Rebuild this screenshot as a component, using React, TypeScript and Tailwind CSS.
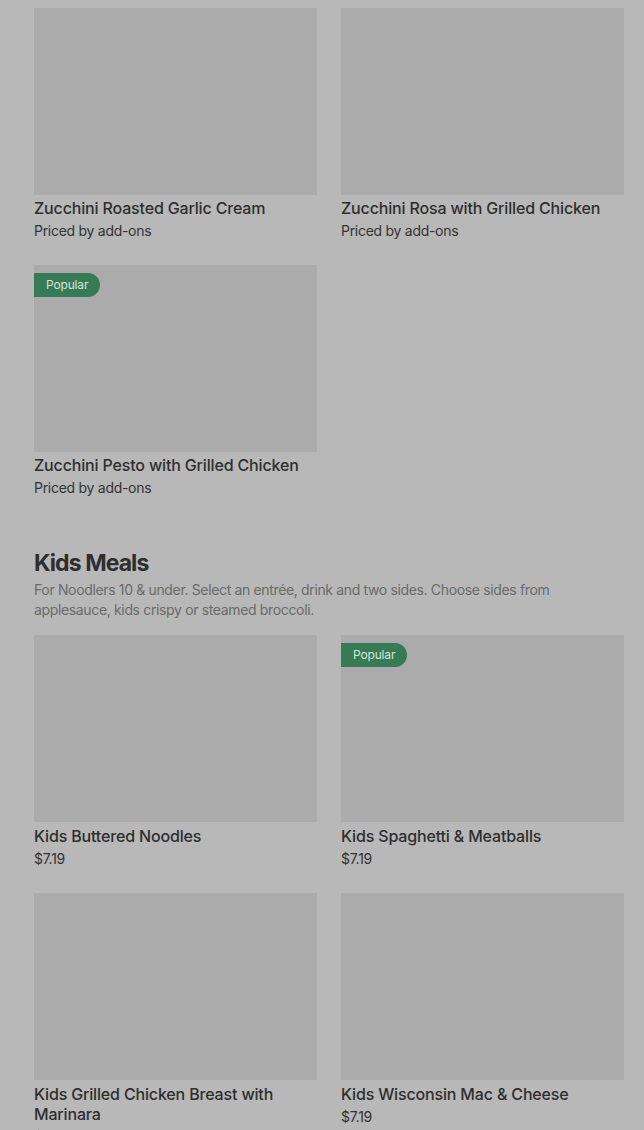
import React from "react";

type Item = { name: string; sub: string; popular?: boolean };

const zucchini: Item[] = [
  { name: "Zucchini Roasted Garlic Cream", sub: "Priced by add-ons" },
  { name: "Zucchini Rosa with Grilled Chicken", sub: "Priced by add-ons" },
  { name: "Zucchini Pesto with Grilled Chicken", sub: "Priced by add-ons", popular: true },
];

const kids: Item[] = [
  { name: "Kids Buttered Noodles", sub: "$7.19" },
  { name: "Kids Spaghetti & Meatballs", sub: "$7.19", popular: true },
  { name: "Kids Grilled Chicken Breast with Marinara", sub: "$7.19" },
  { name: "Kids Wisconsin Mac & Cheese", sub: "$7.19" },
];

const MenuCard = ({ item, loose }: { item: Item; loose?: boolean }) => (
  <div className="flex flex-col">
    <div className="relative h-[187px] w-full bg-[#ababab]">
      {item.popular && (
        <span className="absolute left-0 top-2 flex h-6 items-center rounded-r-full bg-[#367b56] pl-3 pr-3 text-xs text-[#d5e6da]">
          Popular
        </span>
      )}
    </div>
    <div className={loose ? "mt-[4px] text-base font-medium leading-5 text-[#2e2e2e]" : "mt-[3px] text-base font-medium leading-5 text-[#2e2e2e]"}>
      {item.name}
    </div>
    <div className="mt-[3px] text-sm leading-5 tracking-[-0.02em] text-[#333]">{item.sub}</div>
  </div>
);

export default function App() {
  return (
    <div className="min-h-[1130px] w-[644px] overflow-hidden bg-[#b8b8b8] pl-[34px] pr-5 pt-2 font-['Inter',sans-serif] tracking-[-0.01em]">
      <div className="grid grid-cols-2 gap-x-6 gap-y-6">
        {zucchini.map((it) => (
          <MenuCard key={it.name} item={it} />
        ))}
      </div>

      <div className="mt-[51px]">
        <h2 className="text-[23px] font-bold leading-7 tracking-[-0.04em] text-[#2e2e2e]">Kids Meals</h2>
        <p className="mt-[3px] pr-6 text-sm leading-5 tracking-[-0.025em] text-[#6a6a6a]">
          For Noodlers 10 &amp; under. Select an entrée, drink and two sides. Choose sides from applesauce, kids crispy or steamed broccoli.
        </p>
      </div>

      <div className="mt-[15px] grid grid-cols-2 gap-x-6 gap-y-6">
        {kids.map((it) => (
          <MenuCard key={it.name} item={it} loose />
        ))}
      </div>
    </div>
  );
}
